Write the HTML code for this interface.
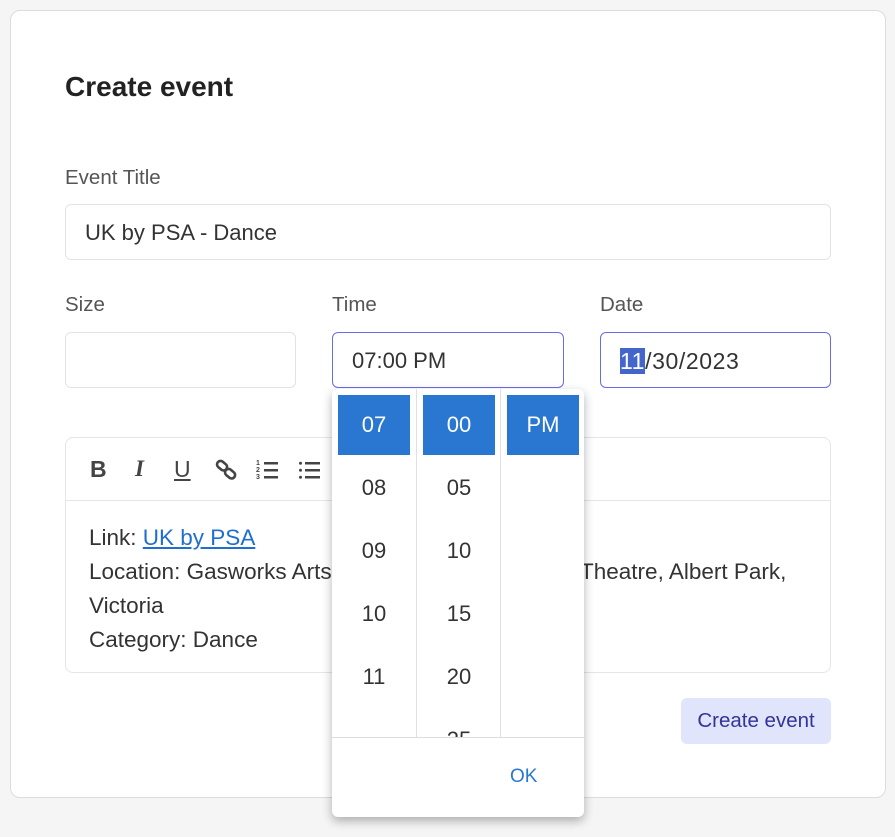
<!DOCTYPE html>
<html><head><meta charset="utf-8"><style>
*{box-sizing:border-box;margin:0;padding:0}
body{width:895px;height:837px;background:#f5f5f5;font-family:"Liberation Sans",sans-serif;position:relative;overflow:hidden;color:#333}
.a{position:absolute}
.card{left:10px;top:10px;width:876px;height:788px;background:#fff;border:1px solid #dcdcdc;border-radius:10px}
h1{position:absolute;left:65px;top:71px;font-size:28px;font-weight:bold;color:#222}
.lbl{position:absolute;font-size:20.5px;color:#555}
.inp{position:absolute;border:1px solid #e3e3e3;border-radius:6px;height:56px;font-size:22px;color:#333;line-height:56px;padding-left:19px}
.foc{border-color:#6b6be8}
.ed{left:65px;top:437px;width:766px;height:236px;border:1px solid #e6e6e6;border-radius:8px}
.tb{position:absolute;left:0;right:0;top:0;height:63px;border-bottom:1px solid #e6e6e6}
.tb span{position:absolute;top:18px;font-size:23px;color:#444;font-weight:bold}
.txt{position:absolute;left:23px;top:83px;font-size:22.5px;line-height:34px;color:#333}
.txt a{color:#1f6fd0;text-decoration:underline}
.btn{left:681px;top:698px;width:150px;height:46px;background:#e0e5fc;border-radius:6px;color:#333399;font-size:20.5px;text-align:center;line-height:46px}
.pop{left:332px;top:389px;width:252px;height:428px;background:#fff;border-radius:6px;box-shadow:0 4px 10px rgba(0,0,0,.3);overflow:hidden}
.col{position:absolute;top:0;height:348px;width:84px;overflow:hidden}
.col div{position:absolute;left:6px;width:72px;height:60px;line-height:60px;text-align:center;font-size:22px;color:#333}
.col div.s{background:#2a77d2;color:#fff}
.sep{position:absolute;top:0;height:348px;width:1px;background:#e0e0e0}
.ft{position:absolute;left:0;right:0;top:348px;height:80px;border-top:1px solid #ddd}
</style></head><body>
<div class="a card"></div>
<h1>Create event</h1>
<div class="lbl" style="left:65px;top:166px">Event Title</div>
<div class="inp" style="left:65px;top:204px;width:766px">UK by PSA - Dance</div>
<div class="lbl" style="left:65px;top:293px">Size</div>
<div class="lbl" style="left:332px;top:293px">Time</div>
<div class="lbl" style="left:600px;top:293px">Date</div>
<div class="inp" style="left:65px;top:332px;width:231px"></div>
<div class="inp foc" style="left:332px;top:332px;width:232px">07:00 PM</div>
<div class="inp foc" style="left:600px;top:332px;width:231px;font-size:23px;letter-spacing:0.6px"><span style="background:#4466cc;color:#fff">11</span>/30/2023</div>
<div class="a ed">
 <div class="tb">
  <span style="left:24px">B</span>
  <span style="left:69px;font-style:italic;font-family:'Liberation Serif',serif">I</span>
  <span style="left:108px;text-decoration:underline;font-weight:normal">U</span>
  <svg class="a" style="left:149px;top:20px" width="24" height="24" viewBox="0 0 24 24"><g fill="none" stroke="#444" stroke-width="2.6"><rect x="2" y="4" width="11" height="7" rx="3.5" transform="rotate(40 7 7)"/><rect x="10" y="12" width="11" height="7" rx="3.5" transform="rotate(40 15 15)"/></g></svg>
  <svg class="a" style="left:190px;top:20px" width="24" height="24" viewBox="0 0 24 24"><g fill="#444"><rect x="8" y="4" width="14" height="2.5"/><rect x="8" y="11" width="14" height="2.5"/><rect x="8" y="18" width="14" height="2.5"/></g><text x="0" y="7" font-size="7" font-family="Liberation Sans" font-weight="bold" fill="#444">1</text><text x="0" y="14" font-size="7" font-family="Liberation Sans" font-weight="bold" fill="#444">2</text><text x="0" y="21" font-size="7" font-family="Liberation Sans" font-weight="bold" fill="#444">3</text></svg>
  <svg class="a" style="left:232px;top:20px" width="24" height="24" viewBox="0 0 24 24"><g fill="#444"><rect x="7" y="4" width="15" height="2.5"/><rect x="7" y="11" width="15" height="2.5"/><rect x="7" y="18" width="15" height="2.5"/><circle cx="2.5" cy="5.2" r="1.5"/><circle cx="2.5" cy="12.2" r="1.5"/><circle cx="2.5" cy="19.2" r="1.5"/></g></svg>
 </div>
 <div class="txt">Link: <a>UK by PSA</a><br>Location: Gasworks Arts Park - Gasworks Studio Theatre, Albert Park,<br>Victoria<br>Category: Dance</div>
</div>
<div class="a btn">Create event</div>
<div class="a pop">
 <div class="col" style="left:0"><div class="s" style="top:6px">07</div><div style="top:69px">08</div><div style="top:132px">09</div><div style="top:195px">10</div><div style="top:258px">11</div></div>
 <div class="sep" style="left:84px"></div>
 <div class="col" style="left:85px"><div class="s" style="top:6px">00</div><div style="top:69px">05</div><div style="top:132px">10</div><div style="top:195px">15</div><div style="top:258px">20</div><div style="top:321px">25</div></div>
 <div class="sep" style="left:168px"></div>
 <div class="col" style="left:169px"><div class="s" style="top:6px">PM</div></div>
 <div class="ft"><div class="a" style="left:178px;top:28px;font-size:19px;color:#2a77d2">OK</div></div>
</div>
</body></html>
